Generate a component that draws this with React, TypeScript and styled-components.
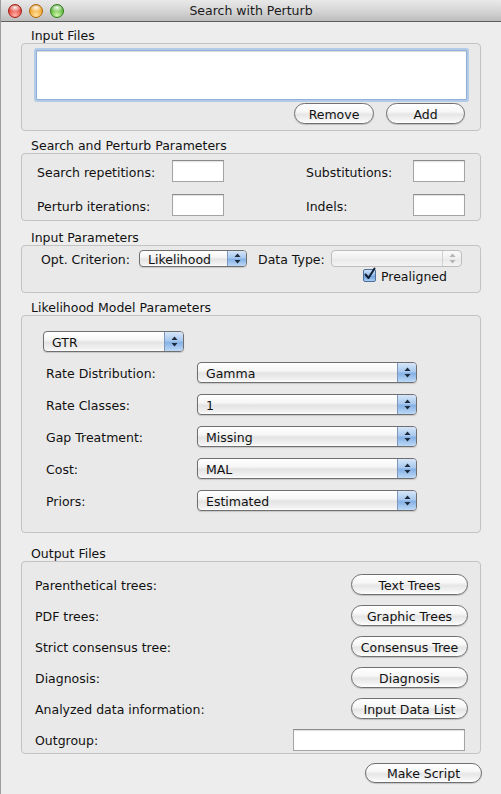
import React from "react";
import styled, { createGlobalStyle, css } from "styled-components";

const GlobalStyle = createGlobalStyle`
  html, body { margin: 0; padding: 0; background: #ededed; }
  body { font-family: "DejaVu Sans", "Liberation Sans", sans-serif; font-size: 12.5px; color: #111; }
  * { box-sizing: border-box; }
`;

const Window = styled.div`
  width: 501px;
  height: 794px;
  background: #ededed;
  border-left: 1px solid #9c9c9c;
  display: flex;
  flex-direction: column;
  overflow: hidden;
`;

const TitleBar = styled.div`
  height: 22px;
  flex: none;
  display: flex;
  align-items: center;
  position: relative;
  background: linear-gradient(#e9e9e9 0%, #d6d6d6 50%, #bcbcbc 100%);
  border-bottom: 1px solid #5e5e5e;
`;

const Lights = styled.div`
  display: flex;
  gap: 7px;
  padding-left: 7px;
`;

const lightColors: Record<string, [string, string, string]> = {
  red: ["#ffb3aa", "#e2463c", "#a51d14"],
  yellow: ["#ffe2a0", "#f0a62b", "#b0680a"],
  green: ["#d2f5b0", "#62bb3d", "#2e7d17"],
};

const Light = styled.span<{ $c: string }>`
  width: 14px;
  height: 14px;
  border-radius: 50%;
  border: 1px solid ${(p) => lightColors[p.$c][2]};
  background:
    radial-gradient(ellipse 60% 35% at 50% 22%, rgba(255,255,255,0.95), rgba(255,255,255,0) 100%),
    radial-gradient(circle at 50% 85%, ${(p) => lightColors[p.$c][0]} 0%, ${(p) => lightColors[p.$c][1]} 60%, ${(p) => lightColors[p.$c][2]} 100%);
`;

const Title = styled.div`
  position: absolute;
  left: 0;
  right: 0;
  text-align: center;
  font-size: 12.5px;
  color: #1a1a1a;
  pointer-events: none;
`;

const Content = styled.div`
  padding: 0 20px 0 20px;
  display: flex;
  flex-direction: column;
`;

const GroupTitle = styled.div<{ $mt: number }>`
  margin-top: ${(p) => p.$mt}px;
  padding-left: 10px;
  padding-top: 2px;
  height: 17px;
  line-height: 15px;
  font-size: 12.5px;
  color: #111;
`;

const GroupBox = styled.div<{ $pad: string }>`
  border: 1px solid #c3c3c3;
  border-radius: 4px;
  background: #e9e9e9;
  padding: ${(p) => p.$pad};
`;

const FileList = styled.div`
  height: 50px;
  background: #fff;
  border: 1px solid #8fb0d8;
  box-shadow: 0 0 0 2px #b4cbe8, inset 0 1px 1px rgba(0,0,0,0.15);
  border-radius: 1px;
`;

const ButtonRow = styled.div`
  display: flex;
  justify-content: flex-end;
  gap: 12px;
  margin-top: 3px;
  padding-right: 2px;
`;

const PushButton = styled.div<{ $w: number; $h?: number }>`
  width: ${(p) => p.$w}px;
  height: ${(p) => p.$h ?? 21}px;
  border: 1px solid #6f6f6f;
  border-radius: 11px;
  background: linear-gradient(#ffffff 0%, #f7f7f7 40%, #e6e6e6 55%, #f4f4f4 85%, #ffffff 100%);
  box-shadow: 0 1px 1px rgba(0,0,0,0.18);
  display: flex;
  align-items: center;
  justify-content: center;
  padding-top: 1px;
  font-size: 12.5px;
  color: #111;
  white-space: nowrap;
`;

const ParamGrid = styled.div`
  display: grid;
  grid-template-columns: 135px 52px 1fr 107px 52px;
  grid-auto-rows: 22px;
  row-gap: 12px;
  align-items: center;
`;

const FieldLabel = styled.div`
  font-size: 12.5px;
  color: #111;
  white-space: nowrap;
  padding-top: 2px;
`;

const TextField = styled.div<{ $w: number; $col?: number }>`
  width: ${(p) => p.$w}px;
  height: 22px;
  background: #fff;
  border: 1px solid #a4a4a4;
  border-top-color: #8a8a8a;
  box-shadow: inset 0 1px 1px rgba(0,0,0,0.12);
  ${(p) => p.$col && css`grid-column: ${p.$col};`}
`;

const InputGrid = styled.div`
  display: grid;
  grid-template-columns: 98px 108px 11px 73px 131px;
  align-items: center;
`;

const CheckCell = styled.div`
  grid-column: 5;
  display: flex;
  align-items: center;
  gap: 5px;
  padding-left: 32px;
  height: 15px;
  margin-top: 1px;
`;

const CheckBox = styled.span`
  width: 13px;
  height: 13px;
  border: 1px solid #4d6f9c;
  border-radius: 2px;
  background: linear-gradient(#cfe2f8 0%, #8fb7e6 50%, #6d9fdc 55%, #a9cdf2 100%);
  position: relative;
  display: flex;
  align-items: center;
  justify-content: center;
`;

const PopupBox = styled.div<{ $w: number; $small?: boolean; $disabled?: boolean }>`
  width: ${(p) => p.$w}px;
  height: ${(p) => (p.$small ? 17 : 21)}px;
  border: 1px solid ${(p) => (p.$disabled ? "#bdbdbd" : "#6f6f6f")};
  border-radius: 4px;
  background: ${(p) =>
    p.$disabled
      ? "linear-gradient(#fafafa, #efefef 50%, #e9e9e9 55%, #f4f4f4)"
      : "linear-gradient(#ffffff 0%, #f6f6f6 40%, #e4e4e4 55%, #f2f2f2 90%, #ffffff 100%)"};
  box-shadow: ${(p) => (p.$disabled ? "none" : "0 1px 1px rgba(0,0,0,0.15)")};
  display: flex;
  align-items: stretch;
  overflow: hidden;
`;

const PopupValue = styled.div`
  flex: 1;
  display: flex;
  align-items: center;
  padding-left: 8px;
  padding-top: 1px;
  font-size: 12.5px;
  color: #111;
  white-space: nowrap;
`;

const PopupStepper = styled.div<{ $disabled?: boolean }>`
  width: 19px;
  flex: none;
  display: flex;
  align-items: center;
  justify-content: center;
  border-left: 1px solid ${(p) => (p.$disabled ? "#d0d0d0" : "#7e98bd")};
  background: ${(p) =>
    p.$disabled
      ? "transparent"
      : "linear-gradient(#d6e6f8 0%, #a9c9ef 45%, #86b2e6 55%, #bcd8f6 100%)"};
`;

const ModelGrid = styled.div`
  display: grid;
  grid-template-columns: 151px 220px;
  grid-auto-rows: 21px;
  row-gap: 11px;
  align-items: center;
  padding-left: 3px;
  margin-top: 10px;
`;

const OutputGrid = styled.div`
  display: grid;
  grid-template-columns: 1fr auto;
  grid-auto-rows: 21px;
  row-gap: 10px;
  align-items: center;
`;

const RightCell = styled.div<{ $mr?: number }>`
  justify-self: end;
  margin-right: ${(p) => p.$mr ?? 0}px;
`;

const Footer = styled.div`
  display: flex;
  justify-content: flex-end;
  margin-top: 9px;
  margin-right: -1px;
`;

const Arrows = ({ disabled }: { disabled?: boolean }) => (
  <svg width="7" height="11" viewBox="0 0 7 11">
    <path d="M3.5 0.5 L6.5 4 L0.5 4 Z" fill={disabled ? "#b4b4b4" : "#1d2a3c"} />
    <path d="M3.5 10.5 L6.5 7 L0.5 7 Z" fill={disabled ? "#b4b4b4" : "#1d2a3c"} />
  </svg>
);

const Popup = ({ value, width, small, disabled }: { value: string; width: number; small?: boolean; disabled?: boolean }) => (
  <PopupBox $w={width} $small={small} $disabled={disabled}>
    <PopupValue>{value}</PopupValue>
    <PopupStepper $disabled={disabled}>
      <Arrows disabled={disabled} />
    </PopupStepper>
  </PopupBox>
);

const modelRows: [string, string][] = [
  ["Rate Distribution:", "Gamma"],
  ["Rate Classes:", "1"],
  ["Gap Treatment:", "Missing"],
  ["Cost:", "MAL"],
  ["Priors:", "Estimated"],
];

const outputRows: [string, string][] = [
  ["Parenthetical trees:", "Text Trees"],
  ["PDF trees:", "Graphic Trees"],
  ["Strict consensus tree:", "Consensus Tree"],
  ["Diagnosis:", "Diagnosis"],
  ["Analyzed data information:", "Input Data List"],
];

export default function App() {
  return (
    <>
      <GlobalStyle />
      <Window>
        <TitleBar>
          <Lights>
            <Light $c="red" />
            <Light $c="yellow" />
            <Light $c="green" />
          </Lights>
          <Title>Search with Perturb</Title>
        </TitleBar>
        <Content>
          <GroupTitle $mt={4}>Input Files</GroupTitle>
          <GroupBox $pad="6px 13px 6px 14px">
            <FileList />
            <ButtonRow>
              <PushButton $w={80}>Remove</PushButton>
              <PushButton $w={79}>Add</PushButton>
            </ButtonRow>
          </GroupBox>

          <GroupTitle $mt={5}>Search and Perturb Parameters</GroupTitle>
          <GroupBox $pad="6px 15px 4px 15px">
            <ParamGrid>
              <FieldLabel>Search repetitions:</FieldLabel>
              <TextField $w={52} />
              <span />
              <FieldLabel>Substitutions:</FieldLabel>
              <TextField $w={52} />
              <FieldLabel>Perturb iterations:</FieldLabel>
              <TextField $w={52} />
              <span />
              <FieldLabel>Indels:</FieldLabel>
              <TextField $w={52} />
            </ParamGrid>
          </GroupBox>

          <GroupTitle $mt={7}>Input Parameters</GroupTitle>
          <GroupBox $pad="4px 10px 9px 19px">
            <InputGrid>
              <FieldLabel>Opt. Criterion:</FieldLabel>
              <Popup value="Likelihood" width={108} small />
              <span />
              <FieldLabel>Data Type:</FieldLabel>
              <Popup value="" width={131} small disabled />
              <CheckCell>
                <CheckBox>
                  <svg width="13" height="13" viewBox="0 0 13 13" style={{ position: "absolute", left: -1, top: -3 }}>
                    <path d="M2.5 7.5 L5.5 11 L11.5 1.5" fill="none" stroke="#0f1f33" strokeWidth="2" strokeLinecap="round" strokeLinejoin="round" />
                  </svg>
                </CheckBox>
                <FieldLabel>Prealigned</FieldLabel>
              </CheckCell>
            </InputGrid>
          </GroupBox>

          <GroupTitle $mt={5}>Likelihood Model Parameters</GroupTitle>
          <GroupBox $pad="15px 10px 21px 21px">
            <Popup value="GTR" width={141} />
            <ModelGrid>
              {modelRows.map(([label, value]) => (
                <React.Fragment key={label}>
                  <FieldLabel>{label}</FieldLabel>
                  <Popup value={value} width={220} />
                </React.Fragment>
              ))}
            </ModelGrid>
          </GroupBox>

          <GroupTitle $mt={11}>Output Files</GroupTitle>
          <GroupBox $pad="12px 12px 3px 13px">
            <OutputGrid>
              {outputRows.map(([label, btn]) => (
                <React.Fragment key={label}>
                  <FieldLabel>{label}</FieldLabel>
                  <RightCell>
                    <PushButton $w={117}>{btn}</PushButton>
                  </RightCell>
                </React.Fragment>
              ))}
              <FieldLabel>Outgroup:</FieldLabel>
              <RightCell $mr={3}>
                <TextField $w={172} />
              </RightCell>
            </OutputGrid>
          </GroupBox>

          <Footer>
            <PushButton $w={117} $h={20}>Make Script</PushButton>
          </Footer>
        </Content>
      </Window>
    </>
  );
}
